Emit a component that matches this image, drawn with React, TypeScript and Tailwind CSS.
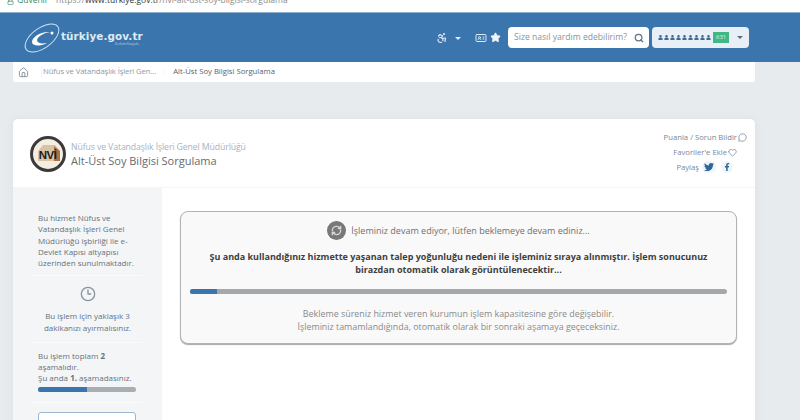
import { Accessibility, Star, Search, ChevronRight, Home, MessageCircle, Heart, Clock3, RefreshCw, IdCard, Lock } from "lucide-react";
import { FaTwitter, FaFacebookF, FaUser } from "react-icons/fa";

const font = { sans: "font-['Open_Sans',sans-serif]" };

function Logo() {
  return (
    <div className="flex items-center">
      <svg width="38" height="32" viewBox="0 0 38 32" fill="none">
        <ellipse cx="19" cy="16" rx="19.5" ry="10" transform="rotate(-36 19 16)" stroke="#cfe3f2" strokeWidth="1" />
        <path d="M27 10 C18 9 9 15 9 20 C9 24 16 25 24 21 C18 22 14 21 14 18 C15 14 21 11 27 10 Z" fill="#ffffff" />
        <circle cx="29" cy="11" r="1.5" fill="#ffffff" />
      </svg>
      <div className="flex flex-col items-end">
        <span className="font-['DejaVu_Sans',sans-serif] text-[10.4px] leading-[13px] font-bold tracking-[0.1px] text-[#dfeaf3]">türkiye.gov.tr</span>
        <span className="mr-1 text-[3px] leading-[3px] text-[#c5d8e8]">Devletin Kısayolu</span>
      </div>
    </div>
  );
}

function TopBar() {
  return (
    <header className="flex h-[50px] items-center justify-between border-t border-[#8fb0cd] bg-[#3a75ad] pr-[51px] pl-[23px]">
      <Logo />
      <div className="flex items-center">
        <Accessibility size={12} strokeWidth={2.4} className="text-[#dfe9f2]" />
        <span className="mt-px ml-[7px] h-0 w-0 border-x-[3px] border-t-[3px] border-x-transparent border-t-[#e6eef5]" />
        <IdCard size={12} className="ml-[14px] text-[#dfe9f2]" />
        <Star size={11} fill="#eef4f9" className="ml-[3px] text-[#eef4f9]" />
        <div className="ml-[7px] flex h-[21px] w-[141px] items-center justify-between rounded-[4px] bg-white pr-[5px] pl-[6px]">
          <span className="text-[8.6px] whitespace-nowrap text-[#8b939b]">Size nasıl yardım edebilirim?</span>
          <Search size={10} strokeWidth={3} className="text-[#5f7482]" />
        </div>
        <div className="ml-[3px] flex h-[21px] w-[97px] items-center rounded-[4px] bg-[#e8eff6] pr-[6px] pl-[6px]">
          <div className="flex gap-[1px]">
            {[0, 1, 2, 3, 4, 5, 6, 7, 8].map((i) => (
              <FaUser key={i} size={5} className="text-[#3f6a98]" />
            ))}
          </div>
          <span className="ml-[2px] bg-[#41b883] px-[3px] text-[6px] leading-[11px] text-[#dff5e9]">631</span>
          <span className="ml-auto h-0 w-0 border-x-[3px] border-t-[3px] border-x-transparent border-t-[#5d6b78]" />
        </div>
      </div>
    </header>
  );
}

function Breadcrumb() {
  return (
    <nav className="ml-[13px] flex h-[20px] w-[742px] items-center rounded-b-[3px] bg-white pl-[5px] text-[7.7px]">
      <Home size={11} className="text-[#7f8c97]" />
      <span className="ml-3 h-3 w-px bg-[#f1f3f5]" />
      <span className="ml-[1px] tracking-[-0.1px] text-[#8b99ab]">Nüfus ve Vatandaşlık İşleri Gen...</span>
      <ChevronRight size={9} className="mx-[3px] text-[#eef0f2]" />
      <span className="ml-[2px] text-[#5b6168]">Alt-Üst Soy Bilgisi Sorgulama</span>
    </nav>
  );
}

function NviBadge() {
  return (
    <svg width="36" height="36" viewBox="0 0 36 36">
      <circle cx="18" cy="18" r="16.5" fill="#f4ede2" stroke="#3a3a3a" strokeWidth="3" />
      <path d="M8 15 L13 9 H25 L30 15 V25 H8 Z" fill="#d9c3a6" />
      <path d="M24 10 L30 15 V25 H24 Z" fill="#a9744a" />
      <text x="17.5" y="23" textAnchor="middle" fontFamily="Liberation Sans, sans-serif" fontSize="11.5" fontWeight="700" letterSpacing="-0.5" fill="#231c18">
        NVİ
      </text>
    </svg>
  );
}

function CardHead() {
  return (
    <div className="flex h-[69px] items-start justify-between border-b border-[#f3f4f6] pr-2 pl-[17px]">
      <div className="mt-[17px] flex items-center gap-[5px]">
        <NviBadge />
        <div>
          <p className="text-[8.7px] leading-[12px] tracking-[-0.1px] text-[#a9b1bf]">Nüfus ve Vatandaşlık İşleri Genel Müdürlüğü</p>
          <p className="text-[11px] leading-[15px] text-[#666c70]">Alt-Üst Soy Bilgisi Sorgulama</p>
        </div>
      </div>
      <div className="mt-[12px] flex flex-col items-end gap-[3px] text-[7.7px] leading-[12px] text-[#7c8798]">
        <span className="flex items-center gap-px">
          Puanla / Sorun Bildir
          <MessageCircle size={9} />
        </span>
        <span className="mr-[10px] flex items-center gap-px">
          Favoriler&apos;e Ekle
          <Heart size={9} />
        </span>
        <span className="mr-[14px] flex items-center">
          Paylaş
          <span className="ml-[3px] flex h-3 w-[14px] items-center justify-center rounded-full bg-[#eef4f9]">
            <FaTwitter size={10} className="text-[#2f6797]" />
          </span>
          <span className="ml-[5px] flex h-3 w-[12px] items-center justify-center rounded-full bg-[#eef4f9]">
            <FaFacebookF size={8} className="text-[#2f6797]" />
          </span>
        </span>
      </div>
    </div>
  );
}

function Sidebar() {
  return (
    <aside className="w-[149px] shrink-0 bg-[#f3f5f7] pt-6 text-[8px] leading-[11.25px] text-[#68727b]">
      <div className="mx-[19px] border-b border-[#fafbfc] px-[6px] pb-[7px]">
        <p className="w-[100px]">Bu hizmet Nüfus ve Vatandaşlık İşleri Genel Müdürlüğü işbirliği ile e-Devlet Kapısı altyapısı üzerinden sunulmaktadır.</p>
      </div>
      <div className="mx-[19px] flex flex-col items-center border-b border-[#fafbfc] pt-[10px] pb-[9px] text-center">
        <Clock3 size={16} className="text-[#8a949d]" />
        <p className="mt-[8px]">
          Bu işlem için yaklaşık 3
          <br />
          dakikanızı ayırmalısınız.
        </p>
      </div>
      <div className="mx-[19px] border-b border-[#fafbfc] px-[6px] pt-[7px] pb-[10px]">
        <p className="whitespace-nowrap">
          Bu işlem toplam <b>2</b>
          <br />
          aşamalıdır.
          <br />
          Şu anda <b>1.</b> aşamadasınız.
        </p>
        <div className="mt-[3px] h-[5px] w-[98px] overflow-hidden rounded-full bg-[#a9aeb3]">
          <div className="h-full w-1/2 bg-[#3a75ad]" />
        </div>
      </div>
      <div className="mx-[25px] mt-[9px] h-8 w-[98px] rounded-[3px] border border-[#9db6cf] bg-white" />
    </aside>
  );
}

function QueueBox() {
  return (
    <div className="mx-[18px] mt-[23px] flex h-[133px] w-[557px] flex-col items-center rounded-[8px] border border-[#b1b4b6] bg-[#f9f9f9] px-[9px] pt-[9px] text-center shadow-[0_1px_1px_#a8a8a8]">
      <div className="flex items-center gap-[5px]">
        <span className="flex h-[19px] w-[19px] items-center justify-center rounded-full bg-[#787878]">
          <RefreshCw size={11} strokeWidth={3} className="text-[#d6d6d6]" />
        </span>
        <span className="text-[9px] text-[#707070]">İşleminiz devam ediyor, lütfen beklemeye devam ediniz...</span>
      </div>
      <p className="mt-[10px] text-[9px] leading-[13px] font-bold text-[#3f3f3f]">
        Şu anda kullandığınız hizmette yaşanan talep yoğunluğu nedeni ile işleminiz sıraya alınmıştır. İşlem sonucunuz
        <br />
        birazdan otomatik olarak görüntülenecektir...
      </p>
      <div className="mt-[13px] h-[5px] w-full overflow-hidden rounded-full bg-[#a4a8aa]">
        <div className="h-full w-[27px] bg-[#3a75ad]" />
      </div>
      <p className="mt-[13px] text-[8.9px] leading-[13px] text-[#8a8a8a]">
        Bekleme süreniz hizmet veren kurumun işlem kapasitesine göre değişebilir.
        <br />
        İşleminiz tamamlandığında, otomatik olarak bir sonraki aşamaya geçeceksiniz.
      </p>
    </div>
  );
}

export default function App() {
  return (
    <div className={`h-[420px] w-[800px] overflow-hidden bg-[#e8ebee] ${font.sans}`}>
      {/* adres çubuğu */}
      <div className="flex h-3 items-end overflow-hidden bg-white pb-[7px] pl-[7px] text-[8.5px] leading-[10px] whitespace-nowrap">
        <Lock size={7} className="text-[#2e7d4f]" />
        <span className="ml-[3px] text-[#3f8a5b]">Güvenli</span>
        <span className="ml-[9px] text-[#8a8a8a]">
          https://<span className="text-[#333]">www.turkiye.gov.tr</span>/nvi-alt-ust-soy-bilgisi-sorgulama
        </span>
      </div>
      <TopBar />
      <Breadcrumb />
      <main className="mt-[37px] ml-[13px] h-[320px] w-[742px] overflow-hidden rounded-t-[5px] bg-white shadow-[0_0_10px_rgba(0,0,0,0.05)]">
        <CardHead />
        <div className="flex h-[251px]">
          <Sidebar />
          <QueueBox />
        </div>
      </main>
    </div>
  );
}
